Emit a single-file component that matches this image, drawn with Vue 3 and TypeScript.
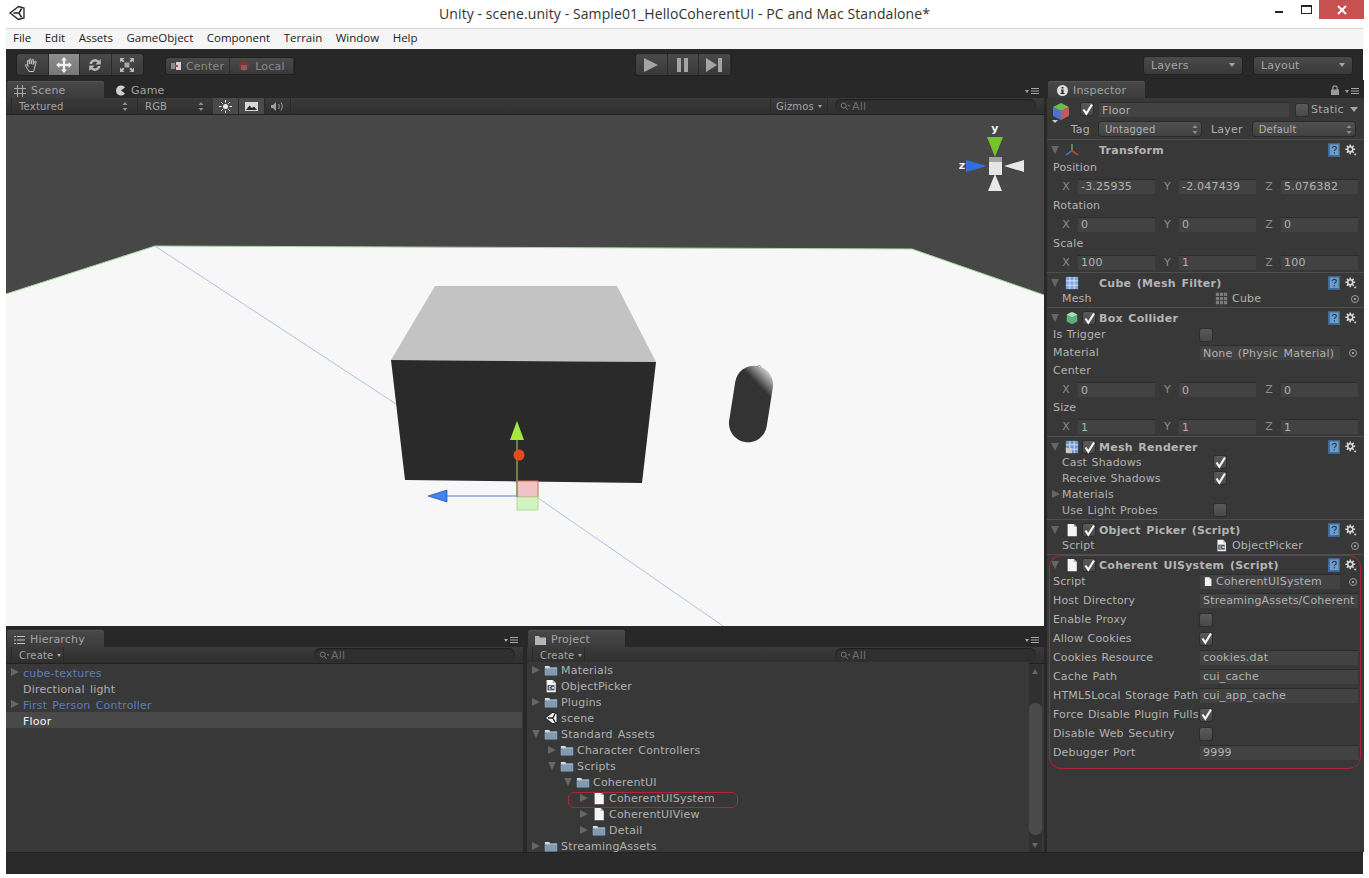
<script setup lang="ts">
type RowKind = 'label' | 'vec' | 'field' | 'check' | 'object' | 'fold'

interface Row {
  kind: RowKind
  label: string
  value?: string
  vec?: [string, string, string]
  checked?: boolean
  icon?: string
  target?: boolean
}

interface Section {
  title: string
  icon: string
  enabled?: boolean
  density: 'rows-t' | 'rows-19' | 'rows-18' | 'rows-16'
  rows: Row[]
}

interface TreeNode {
  name: string
  depth: number
  arrow?: 'right' | 'down'
  icon?: string
  tone?: 'prefab' | 'selected'
}

const menus = ['File', 'Edit', 'Assets', 'GameObject', 'Component', 'Terrain', 'Window', 'Help']
const tools = ['i-hand', 'i-move', 'i-rotate', 'i-scale']

const sections: Section[] = [
  {
    title: 'Transform', icon: 'i-axes', density: 'rows-t',
    rows: [
      { kind: 'label', label: 'Position' },
      { kind: 'vec', label: '', vec: ['-3.25935', '-2.047439', '5.076382'] },
      { kind: 'label', label: 'Rotation' },
      { kind: 'vec', label: '', vec: ['0', '0', '0'] },
      { kind: 'label', label: 'Scale' },
      { kind: 'vec', label: '', vec: ['100', '1', '100'] },
    ],
  },
  {
    title: 'Cube (Mesh Filter)', icon: 'i-mesh', density: 'rows-16',
    rows: [{ kind: 'object', label: 'Mesh', value: 'Cube', icon: 'i-meshgrid', target: true }],
  },
  {
    title: 'Box Collider', icon: 'i-collider', enabled: true, density: 'rows-18',
    rows: [
      { kind: 'check', label: 'Is Trigger', checked: false },
      { kind: 'field', label: 'Material', value: 'None (Physic Material)', target: true },
      { kind: 'label', label: 'Center' },
      { kind: 'vec', label: '', vec: ['0', '0', '0'] },
      { kind: 'label', label: 'Size' },
      { kind: 'vec', label: '', vec: ['1', '1', '1'] },
    ],
  },
  {
    title: 'Mesh Renderer', icon: 'i-renderer', enabled: true, density: 'rows-16',
    rows: [
      { kind: 'check', label: 'Cast Shadows', checked: true },
      { kind: 'check', label: 'Receive Shadows', checked: true },
      { kind: 'fold', label: 'Materials' },
      { kind: 'check', label: 'Use Light Probes', checked: false },
    ],
  },
  {
    title: 'Object Picker (Script)', icon: 'i-file', enabled: true, density: 'rows-16',
    rows: [{ kind: 'object', label: 'Script', value: 'ObjectPicker', icon: 'i-csfile', target: true }],
  },
  {
    title: 'Coherent UISystem (Script)', icon: 'i-file', enabled: true, density: 'rows-19',
    rows: [
      { kind: 'field', label: 'Script', value: 'CoherentUISystem', icon: 'i-file', target: true },
      { kind: 'field', label: 'Host Directory', value: 'StreamingAssets/Coherent' },
      { kind: 'check', label: 'Enable Proxy', checked: false },
      { kind: 'check', label: 'Allow Cookies', checked: true },
      { kind: 'field', label: 'Cookies Resource', value: 'cookies.dat' },
      { kind: 'field', label: 'Cache Path', value: 'cui_cache' },
      { kind: 'field', label: 'HTML5Local Storage Path', value: 'cui_app_cache' },
      { kind: 'check', label: 'Force Disable Plugin Fulls', checked: true },
      { kind: 'check', label: 'Disable Web Secutiry', checked: false },
      { kind: 'field', label: 'Debugger Port', value: '9999' },
    ],
  },
]

const hierarchy: TreeNode[] = [
  { name: 'cube-textures', depth: 0, arrow: 'right', tone: 'prefab' },
  { name: 'Directional light', depth: 0 },
  { name: 'First Person Controller', depth: 0, arrow: 'right', tone: 'prefab' },
  { name: 'Floor', depth: 0, tone: 'selected' },
]

const project: TreeNode[] = [
  { name: 'Materials', depth: 0, arrow: 'right', icon: 'i-folder' },
  { name: 'ObjectPicker', depth: 0, icon: 'i-csfile' },
  { name: 'Plugins', depth: 0, arrow: 'right', icon: 'i-folder' },
  { name: 'scene', depth: 0, icon: 'i-unity' },
  { name: 'Standard Assets', depth: 0, arrow: 'down', icon: 'i-folder' },
  { name: 'Character Controllers', depth: 1, arrow: 'right', icon: 'i-folder' },
  { name: 'Scripts', depth: 1, arrow: 'down', icon: 'i-folder' },
  { name: 'CoherentUI', depth: 2, arrow: 'down', icon: 'i-folder' },
  { name: 'CoherentUISystem', depth: 3, arrow: 'right', icon: 'i-file' },
  { name: 'CoherentUIView', depth: 3, arrow: 'right', icon: 'i-file' },
  { name: 'Detail', depth: 3, arrow: 'right', icon: 'i-folder' },
  { name: 'StreamingAssets', depth: 0, arrow: 'right', icon: 'i-folder' },
]

const indent = (node: TreeNode) => `${node.depth * 16}px`
</script>

<template>
  <div class="window">
    <!-- shared icons -->
    <svg class="defs" aria-hidden="true">
      <symbol id="i-unity" viewBox="0 0 16 16">
        <path d="M1 8 9.5 1.5 15 3 15 13 9.5 14.5Z" fill="#f2f2f2" stroke="#222" stroke-width="1.3" />
        <path d="M4.5 8H10L12.5 3.6M10 8l2.5 4.4" fill="none" stroke="#222" stroke-width="1.5" />
      </symbol>
      <symbol id="i-hand" viewBox="0 0 16 16">
        <path d="M5 14.5C3.500 12 2 10 1.500 8.500c-.3-1 .8-1.400 1.400-.6L4 9.500 3.400 4c-.1-1 1.200-1.200 1.400-.2L5.500 7 5.600 2.500c0-1 1.400-1 1.400 0L7.300 7 8.100 3c.2-1 1.500-.8 1.400.2L9.200 7.500 10.800 4.500c.4-.9 1.600-.4 1.300.5L10.800 10c-.3 1.800-.8 3-1.300 4.500Z" fill="none" stroke="#c4c4c4" stroke-width="1" />
      </symbol>
      <symbol id="i-move" viewBox="0 0 16 16">
        <path d="M8 0 11 3.500H9.200V6.800H12.500V5L16 8 12.500 11V9.200H9.200V12.500H11L8 16 5 12.500H6.800V9.200H3.500V11L0 8 3.500 5V6.800H6.800V3.500H5Z" fill="#f0f0f0" />
      </symbol>
      <symbol id="i-rotate" viewBox="0 0 16 16">
        <path d="M2.500 7A5.600 5.600 0 0 1 12 3.800L13.800 2V7.500H8.300L10.300 5.500A3.200 3.200 0 0 0 5 7ZM13.500 9A5.600 5.600 0 0 1 4 12.200L2.200 14V8.500H7.700L5.700 10.500A3.200 3.200 0 0 0 11 9Z" fill="#b8b8b8" />
      </symbol>
      <symbol id="i-scale" viewBox="0 0 16 16">
        <path d="M5.500 5.500h5v5h-5z" fill="#a8a8a8" />
        <path d="M1 1h4.500L4 2.500 5.500 4 4 5.500 2.500 4 1 5.500ZM15 1v4.500L13.500 4 12 5.500 10.500 4 12 2.500 10.500 1ZM1 15v-4.500L2.500 12 4 10.500 5.500 12 4 13.500 5.500 15ZM15 15h-4.500L12 13.500 10.500 12 12 10.500 13.500 12 15 10.500Z" fill="#b8b8b8" />
      </symbol>
      <symbol id="i-folder" viewBox="0 0 16 16">
        <path d="M1 3.500h5l1 1.500h8v9H1Z" fill="#d4dde6" />
        <path d="M1 6h14v8H1Z" fill="#7f9ab3" />
      </symbol>
      <symbol id="i-file" viewBox="0 0 16 16">
        <path d="M3 1h7l3.500 3.500V15H3Z" fill="#f4f4f4" />
        <path d="M10 1v3.500h3.500" fill="#b5b5b5" />
      </symbol>
      <symbol id="i-csfile" viewBox="0 0 16 16">
        <path d="M3 1h7l3.500 3.500V15H3Z" fill="#f4f4f4" />
        <path d="M10 1v3.500h3.500" fill="#b5b5b5" />
        <path d="M4 7h8v6H4z" fill="#42505e" />
        <path d="M8 8.500H6v3h2M9.500 9v2M11 9v2M9 9.700h2.500M9 10.500h2.500" stroke="#f4f4f4" fill="none" stroke-width=".8" />
      </symbol>
      <symbol id="i-axes" viewBox="0 0 16 16">
        <path d="M8 9V1" stroke="#5fa04a" stroke-width="1.800" />
        <path d="M8 9 1 13.500" stroke="#4a72c9" stroke-width="1.800" />
        <path d="M8 9 15 13.500" stroke="#c2453c" stroke-width="1.800" />
      </symbol>
      <symbol id="i-mesh" viewBox="0 0 16 16">
        <rect x="1" y="1" width="14" height="14" fill="#7ea6e0" />
        <path d="M1 5.500h14M1 10.500h14M5.500 1v14M10.500 1v14" stroke="#dce8fa" stroke-width="1" />
      </symbol>
      <symbol id="i-renderer" viewBox="0 0 16 16">
        <rect x="1" y="1" width="14" height="14" fill="#6f94c8" />
        <path d="M1 5.500h14M1 10.500h14M5.500 1v14M10.500 1v14" stroke="#dce8fa" stroke-width="1" />
        <path d="M1 9h7v6H1z" fill="#c9c9c9" />
      </symbol>
      <symbol id="i-meshgrid" viewBox="0 0 16 16">
        <path d="M1 1h4v4H1zM6 1h4v4H6zM11 1h4v4h-4zM1 6h4v4H1zM6 6h4v4H6zM11 6h4v4h-4zM1 11h4v4H1zM6 11h4v4H6zM11 11h4v4h-4z" fill="#7b7b7b" />
      </symbol>
      <symbol id="i-collider" viewBox="0 0 16 16">
        <path d="M8 1 14 4v8l-6 3-6-3V4Z" fill="#5fae7e" />
        <path d="M8 1 14 4 8 7 2 4Z" fill="#a3dcb6" />
      </symbol>
      <symbol id="i-gear" viewBox="0 0 16 16">
        <circle cx="7" cy="7" r="3.400" fill="none" stroke="#d8d8d8" stroke-width="2.200" />
        <path d="M7 .5V3M7 11v2.500M.5 7H3M11 7h2.500M2.400 2.400 4.200 4.200M9.800 9.800l1.800 1.800M2.400 11.600 4.200 9.800M9.800 4.200l1.800-1.800" stroke="#d8d8d8" stroke-width="2" />
        <path d="M11.500 13h4L13.500 15.500Z" fill="#d8d8d8" />
      </symbol>
      <symbol id="i-help" viewBox="0 0 13 15">
        <path d="M0 0h13v15H0Z" fill="#3f6a96" />
        <path d="M2 1.500h9.500V13H2Z" fill="#6f9cc8" />
        <path d="M4.500 5.500c0-2.500 4.500-2.500 4.500 0 0 1.500-2.200 1.400-2.200 3M6.800 9.800v1.500" fill="none" stroke="#1f3f60" stroke-width="1.200" />
      </symbol>
      <symbol id="i-check" viewBox="0 0 13 13">
        <path d="M2.500 6.500 5.300 10.800 11 1.500" fill="none" stroke="#f4f4f4" stroke-width="2.200" />
      </symbol>
      <symbol id="i-updown" viewBox="0 0 6 9">
        <path d="M3 0 5.500 3H.5ZM3 9 .5 6h5Z" fill="#8f8f8f" />
      </symbol>
      <symbol id="i-panelmenu" viewBox="0 0 14 8">
        <path d="M0 3h4L2 6ZM6 1h8v1H6ZM6 3.500h8v1H6ZM6 6h8v1H6Z" fill="#a8a8a8" />
      </symbol>
      <symbol id="i-search" viewBox="0 0 12 10">
        <circle cx="4" cy="4" r="2.800" fill="none" stroke="#777" stroke-width="1.100" />
        <path d="M6 6 8.500 9" stroke="#777" stroke-width="1.100" />
        <path d="M8.500 3.500h3L10 5.500Z" fill="#777" />
      </symbol>
    </svg>

    <header class="titlebar">
      <svg class="app-logo"><use href="#i-unity" /></svg>
      <div class="title">Unity - scene.unity - Sample01_HelloCoherentUI - PC and Mac Standalone*</div>
      <div class="win-controls">
        <span class="win-min"></span>
        <span class="win-max"></span>
        <span class="win-close">
          <svg width="10" height="10" viewBox="0 0 10 10"><path d="M1 1 9 9M9 1 1 9" stroke="#fff" stroke-width="2" /></svg>
        </span>
      </div>
    </header>

    <nav class="menubar">
      <span v-for="item in menus" :key="item" class="menu-item">{{ item }}</span>
    </nav>

    <div class="editor">
      <div class="toolbar">
        <div class="btn-group tools">
          <span v-for="(tool, i) in tools" :key="tool" class="tool-btn" :class="{ active: i === 1 }">
            <svg width="16" height="16"><use :href="`#${tool}`" /></svg>
          </span>
        </div>
        <div class="btn-group pivot">
          <span class="pivot-btn">
            <svg width="10" height="8" viewBox="0 0 10 8"><path d="M0 1h4v6H0z" fill="#8b8b8b" /><path d="M5 0h5v8H5z" fill="#d2d2d2" /><path d="M4 3h3v2H4z" fill="#b5483f" /></svg>
            Center
          </span>
          <span class="pivot-btn">
            <svg width="12" height="12" viewBox="0 0 12 12"><circle cx="6" cy="6" r="5" fill="#8c2f2a" /><path d="M3 5h6v5H3z" fill="#6b6b6b" /></svg>
            Local
          </span>
        </div>
        <div class="btn-group playback">
          <span class="play-btn"><svg width="16" height="14" viewBox="0 0 16 14"><path d="M1 0 15 7 1 14Z" fill="#a4a4a4" /></svg></span>
          <span class="play-btn"><svg width="11" height="14" viewBox="0 0 11 14"><path d="M0 0h4v14H0zM7 0h4v14H7z" fill="#a4a4a4" /></svg></span>
          <span class="play-btn"><svg width="16" height="14" viewBox="0 0 16 14"><path d="M0 0 11 7 0 14ZM12 0h4v14h-4z" fill="#a4a4a4" /></svg></span>
        </div>
        <div class="top-drop first">Layers <i class="caret"></i></div>
        <div class="top-drop">Layout <i class="caret"></i></div>
      </div>

      <div class="main">
        <section class="scene-panel">
          <div class="tabs">
            <div class="tab active">
              <svg width="12" height="12" viewBox="0 0 12 12"><path d="M3.500 0v12M8.500 0v12M0 3.500h12M0 8.500h12" stroke="#a8a8a8" /></svg>
              Scene
            </div>
            <div class="tab">
              <svg width="11" height="11" viewBox="0 0 11 11"><path d="M10 2.500A5 5 0 1 0 10 8.500L6 5.500Z" fill="#cfcfcf" /></svg>
              Game
            </div>
            <svg class="panel-menu"><use href="#i-panelmenu" /></svg>
          </div>
          <div class="sub-toolbar">
            <div class="sub-drop textured">Textured <svg width="6" height="9"><use href="#i-updown" /></svg></div>
            <div class="sub-drop rgb">RGB <svg width="6" height="9"><use href="#i-updown" /></svg></div>
            <div class="sub-icon on">
              <svg width="13" height="13" viewBox="0 0 13 13"><circle cx="6.500" cy="6.500" r="2.500" fill="#efefef" /><path d="M6.500 0v2.500M6.500 10.500V13M0 6.500h2.500M10.500 6.500H13M2 2l1.700 1.700M9.300 9.300 11 11M2 11l1.700-1.700M9.300 3.700 11 2" stroke="#efefef" /></svg>
            </div>
            <div class="sub-icon on">
              <svg width="13" height="9" viewBox="0 0 13 9"><path d="M0 0h13v9H0z" fill="#d8d8d8" /><path d="M1 8 4.500 3.500 7 6l2-1.500L12 8Z" fill="#2c2c2c" /></svg>
            </div>
            <div class="sub-icon">
              <svg width="13" height="11" viewBox="0 0 13 11"><path d="M0 4h2l3-3v9L2 7H0Z" fill="#a0a0a0" /><path d="M7.500 3c1 1.500 1 3.500 0 5M10 1.500c1.700 2.500 1.700 5.500 0 8" fill="none" stroke="#a0a0a0" /></svg>
            </div>
            <div class="gizmos">Gizmos <i class="caret small"></i></div>
            <div class="search"><svg width="11" height="9"><use href="#i-search" /></svg>All</div>
          </div>
          <div class="scene-view">
            <!-- scene is a free canvas, coordinates are window pixels -->
            <svg class="scene-canvas" viewBox="6 115 1038 511" preserveAspectRatio="none">
              <defs>
                <linearGradient id="capsule" gradientUnits="userSpaceOnUse" x1="16" y1="-36" x2="4" y2="-20">
                  <stop offset="0" stop-color="#eeeeee" />
                  <stop offset="1" stop-color="#333" />
                </linearGradient>
              </defs>
              <rect x="6" y="115" width="1038" height="511" fill="#474747" />
              <path d="M6 294 155 246 912 249 1044 295V626H6Z" fill="#f7f7f7" />
              <path d="M6 294 155 246 912 249 1044 295" fill="none" stroke="#a5d6a0" stroke-width="1" />
              <path d="M155 246 515 482 723 626" fill="none" stroke="#a9c4e8" stroke-width="1" />
              <path d="M435 286H617L656 362 391 360Z" fill="#c3c3c3" />
              <path d="M391 360 656 362 642 483 405 480Z" fill="#2a2a2a" />
              <rect x="-19" y="-38.500" width="38" height="77" rx="19" transform="translate(751 404) rotate(9)" fill="url(#capsule)" />
              <path d="M757 367c1-2 3-2 4 0" fill="none" stroke="#777" stroke-width=".8" />
              <rect x="517" y="481" width="21" height="16" fill="#f0c4c4" stroke="#d0705c" />
              <rect x="517" y="497" width="21" height="13" fill="#d2f2c2" stroke="#b2dc96" />
              <path d="M517 440V497" stroke="#8a9a50" stroke-width="1.500" />
              <path d="M517 421 524 440H510Z" fill="#a6e83c" />
              <circle cx="519" cy="455" r="5.500" fill="#ea4a1c" />
              <path d="M447 496H517" stroke="#4f86d8" stroke-width="1" />
              <path d="M428 496 447 490V502Z" fill="#3f86f0" stroke="#123a80" stroke-width=".6" />
              <path d="M987 137H1003L995 157Z" fill="#74c42c" />
              <path d="M966 160V172L987 166Z" fill="#2f6fe0" />
              <path d="M1024 160V172L1004 166Z" fill="#e8e8e8" />
              <path d="M995 174 1002 191H988Z" fill="#e8e8e8" />
              <rect x="989" y="157" width="13" height="5" fill="#a2a2a2" />
              <rect x="989" y="162" width="13" height="13" fill="#e6e6e6" />
              <text x="995" y="132" class="gizmo-label" text-anchor="middle">y</text>
              <text x="962" y="169" class="gizmo-label" text-anchor="middle">z</text>
            </svg>
          </div>
        </section>

        <aside class="inspector">
          <div class="tabs">
            <div class="tab active inspector-tab">
              <svg width="11" height="11" viewBox="0 0 11 11"><circle cx="5.500" cy="5.500" r="5.500" fill="#dcdcdc" /><path d="M4.500 2h2v1.500h-2zM4 4.500h2.500V8H7.500V9h-4V8h1V5.500H4Z" fill="#2a2a2a" /></svg>
              Inspector
            </div>
            <svg class="lock" width="8" height="10" viewBox="0 0 8 10"><path d="M0 4.500h8V10H0z" fill="#9a9a9a" /><path d="M1.800 5V3a2.200 2.200 0 0 1 4.400 0v2" fill="none" stroke="#9a9a9a" stroke-width="1.200" /></svg>
            <svg class="panel-menu"><use href="#i-panelmenu" /></svg>
          </div>

          <div class="object-head">
            <div class="head-lead">
              <svg class="object-cube" width="18" height="22" viewBox="0 0 18 22">
                <path d="M9 1 17 5 9 9 1 5Z" fill="#6dbb55" />
                <path d="M1 5 9 9V18L1 14Z" fill="#4f72cf" />
                <path d="M17 5 9 9V18L17 14Z" fill="#c45a57" />
                <path d="M0 18h6L3 21Z" fill="#c9c9c9" />
              </svg>
              <span class="checkbox"><svg width="13" height="13"><use href="#i-check" /></svg></span>
            </div>
            <div class="head-main">
              <div class="field name-field">Floor</div>
              <span class="checkbox"></span>
              <span class="static-label">Static</span>
              <i class="caret big"></i>
            </div>
            <div class="tag-label">Tag</div>
            <div class="head-main">
              <div class="mini-drop">Untagged <svg width="6" height="9"><use href="#i-updown" /></svg></div>
              <span class="layer-label">Layer</span>
              <div class="mini-drop">Default <svg width="6" height="9"><use href="#i-updown" /></svg></div>
            </div>
          </div>

          <div v-for="section in sections" :key="section.title" class="component" :class="section.density">
            <div class="comp-header">
              <i class="arrow down"></i>
              <svg class="comp-icon" width="14" height="14"><use :href="`#${section.icon}`" /></svg>
              <span class="check-slot">
                <span v-if="section.enabled" class="checkbox"><svg width="13" height="13"><use href="#i-check" /></svg></span>
              </span>
              <span class="comp-title">{{ section.title }}</span>
              <svg class="help" width="12" height="14"><use href="#i-help" /></svg>
              <svg class="gear" width="12" height="12"><use href="#i-gear" /></svg>
            </div>

            <template v-for="(row, i) in section.rows" :key="i">
              <div v-if="row.kind === 'vec'" class="vec-row">
                <template v-for="(v, axis) in row.vec" :key="axis">
                  <span class="axis">{{ ['X', 'Y', 'Z'][axis] }}</span>
                  <span class="field">{{ v }}</span>
                </template>
              </div>
              <div v-else class="row" :class="{ fold: row.kind === 'fold' }">
                <span class="row-label"><i v-if="row.kind === 'fold'" class="arrow right"></i>{{ row.label }}</span>
                <span v-if="row.kind === 'check'" class="checkbox">
                  <svg v-if="row.checked" width="13" height="13"><use href="#i-check" /></svg>
                </span>
                <span v-else-if="row.kind === 'field'" class="field wide" :class="{ short: row.target }">
                  <svg v-if="row.icon" width="10" height="11"><use :href="`#${row.icon}`" /></svg>
                  {{ row.value }}
                </span>
                <span v-else-if="row.kind === 'object'" class="object-ref">
                  <svg width="13" height="13"><use :href="`#${row.icon}`" /></svg>
                  {{ row.value }}
                </span>
                <span v-if="row.target" class="target"></span>
              </div>
            </template>
          </div>

          <div class="red-mark inspector-mark"></div>
        </aside>

        <section class="tree-panel">
          <div class="tabs">
            <div class="tab active">
              <svg width="11" height="10" viewBox="0 0 11 10"><path d="M0 1h2v1H0zM0 4.500h2v1H0zM0 8h2v1H0zM3 1h8v1H3zM3 4.500h8v1H3zM3 8h8v1H3z" fill="#c0c0c0" /></svg>
              Hierarchy
            </div>
            <svg class="panel-menu"><use href="#i-panelmenu" /></svg>
          </div>
          <div class="sub-toolbar">
            <div class="create">Create <i class="caret small"></i></div>
            <div class="search"><svg width="11" height="9"><use href="#i-search" /></svg>All</div>
          </div>
          <div class="tree hierarchy">
            <div v-for="node in hierarchy" :key="node.name" class="node" :class="node.tone">
              <i v-if="node.arrow" class="arrow" :class="node.arrow"></i>
              <span v-else class="arrow-slot"></span>
              <span class="node-name">{{ node.name }}</span>
            </div>
          </div>
        </section>

        <section class="tree-panel">
          <div class="tabs">
            <div class="tab active">
              <svg width="11" height="10" viewBox="0 0 11 10"><path d="M0 1h4l1 1.500h6V10H0Z" fill="#b4b4b4" /></svg>
              Project
            </div>
            <svg class="panel-menu"><use href="#i-panelmenu" /></svg>
          </div>
          <div class="sub-toolbar">
            <div class="create">Create <i class="caret small"></i></div>
            <div class="search"><svg width="11" height="9"><use href="#i-search" /></svg>All</div>
          </div>
          <div class="project-body">
            <div class="tree scrolled">
              <div v-for="node in project" :key="node.name" class="node project-node" :style="{ paddingLeft: indent(node) }">
                <i v-if="node.arrow" class="arrow" :class="node.arrow"></i>
                <span v-else class="arrow-slot"></span>
                <svg class="node-icon" width="14" height="14"><use :href="`#${node.icon}`" /></svg>
                <span>{{ node.name }}</span>
              </div>
            </div>
            <div class="scrollbar">
              <i class="scroll-up"></i>
              <div class="thumb"></div>
              <i class="scroll-down"></i>
            </div>
            <div class="red-mark tree-mark"></div>
          </div>
        </section>
      </div>

      <footer class="status"></footer>
    </div>
  </div>
</template>

<style>
html, body { margin: 0; background: #fff; }
</style>

<style scoped>
.window {
  width: 1369px;
  height: 878px;
  background: #fff;
  overflow: hidden;
  font-family: "DejaVu Sans", sans-serif;
  font-size: 11px;
  letter-spacing: 0.2px;
  word-spacing: 1.5px;
  color: #b2b2b2;
}
.defs { position: absolute; width: 0; height: 0; }

.titlebar {
  height: 28px;
  display: grid;
  grid-template-columns: 1fr auto 1fr;
  align-items: center;
}
.app-logo { width: 16px; height: 16px; margin-left: 9px; margin-top: -2px; }
.title {
  font-family: "Open Sans", sans-serif;
  font-size: 14px;
  letter-spacing: 0.09px;
  word-spacing: 0;
  color: #333;
  margin-top: -1px;
}
.win-controls {
  justify-self: end;
  align-self: start;
  display: flex;
  align-items: flex-start;
  margin-right: 5px;
}
.win-min { width: 8px; height: 2px; background: #222; margin: 11px 18px 0 0; }
.win-max { width: 9px; height: 6px; border: 1px solid #222; border-top-width: 2px; margin: 5px 7px 0 0; }
.win-close {
  width: 45px;
  height: 19px;
  background: #c75050;
  display: flex;
  align-items: center;
  justify-content: center;
}

.menubar {
  height: 20px;
  margin: 0 6px;
  box-sizing: content-box;
  background: #f5f5f5;
  border-top: 1px solid #d6d6d6;
  display: flex;
  align-items: flex-start;
  padding-left: 7px;
  gap: 13.5px;
  font-family: "Open Sans", sans-serif;
  font-size: 11.5px;
  line-height: 18px;
  letter-spacing: 0;
  color: #222;
}

.editor {
  margin: 0 6px;
  background: #282828;
  height: 825px;
}

.toolbar {
  height: 31px;
  display: flex;
  align-items: center;
  padding: 0 11px;
  color: #8a8a8a;
}
.btn-group {
  display: flex;
  border-radius: 3px;
  background: linear-gradient(#4a4a4a, #393939);
  box-shadow: 0 0 0 1px #222;
  overflow: hidden;
}
.tools { height: 21px; }
.tool-btn {
  width: 31.5px;
  display: flex;
  align-items: center;
  justify-content: center;
  border-right: 1px solid #2b2b2b;
  box-sizing: border-box;
}
.tool-btn:last-child { border-right: 0; }
.tool-btn.active { background: linear-gradient(#8e8e8e, #777); }
.pivot { margin-left: 23px; height: 16px; margin-top: 3px; }
.pivot-btn {
  width: 64px;
  display: flex;
  align-items: center;
  justify-content: center;
  gap: 5px;
  font-size: 11px;
  border-right: 1px solid #2b2b2b;
  box-sizing: border-box;
}
.playback { margin-left: 342px; height: 21px; }
.play-btn {
  width: 31.5px;
  display: flex;
  align-items: center;
  justify-content: center;
  border-right: 1px solid #2b2b2b;
  box-sizing: border-box;
}
.top-drop {
  width: 98px;
  height: 17px;
  box-sizing: border-box;
  padding: 0 7px;
  display: flex;
  align-items: center;
  justify-content: space-between;
  border-radius: 3px;
  background: linear-gradient(#4a4a4a, #3a3a3a);
  box-shadow: 0 0 0 1px #222;
  color: #a6a6a6;
  margin-left: 12px;
  margin-top: 1px;
}
.top-drop.first { margin-left: auto; }
.caret {
  width: 0;
  height: 0;
  border-left: 3px solid transparent;
  border-right: 3px solid transparent;
  border-top: 4px solid #a6a6a6;
}
.caret.small { border-left-width: 2.500px; border-right-width: 2.500px; border-top-width: 3px; }
.caret.big { border-left-width: 4px; border-right-width: 4px; border-top-width: 5px; margin-left: 6px; }

.main {
  display: grid;
  grid-template-columns: 517px 517px 316px;
  grid-template-rows: 546px 223px;
  column-gap: 4px;
  row-gap: 3px;
  height: 772px;
}
.scene-panel {
  grid-column: 1 / 3;
  display: flex;
  flex-direction: column;
  min-width: 0;
}
.inspector {
  grid-column: 3;
  grid-row: 1 / 3;
  margin-left: -1px;
  position: relative;
  display: flex;
  flex-direction: column;
  background: #383838;
  background-clip: content-box;
  padding-top: 18px;
  width: 317px;
  box-sizing: border-box;
}
.inspector .tabs { margin-top: -18px; }
.tree-panel { display: flex; flex-direction: column; min-width: 0; }

.tabs {
  height: 18px;
  flex: none;
  display: flex;
  align-items: flex-end;
  background: #282828;
  position: relative;
}
.tab {
  width: 97px;
  height: 17px;
  margin-left: 1px;
  padding-left: 7px;
  padding-top: 2px;
  box-sizing: border-box;
  display: flex;
  align-items: center;
  gap: 5px;
  font-size: 11px;
  color: #a2a2a2;
  border-radius: 3px 3px 0 0;
}
.tab.active {
  background: linear-gradient(#484848, #3c3c3c);
  box-shadow: inset 0 1px 0 #555;
}
.tab:not(.active) { margin-left: 4px; }
.inspector-tab { padding-left: 9px; }
.panel-menu {
  width: 14px;
  height: 8px;
  position: absolute;
  right: 5px;
  bottom: 3px;
}
.lock { position: absolute; right: 25px; bottom: 3px; }

.sub-toolbar {
  height: 17px;
  flex: none;
  display: flex;
  align-items: center;
  background: linear-gradient(#3a3a3a, #2f2f2f);
  border-bottom: 1px solid #222;
  box-sizing: border-box;
  padding-left: 5px;
  font-size: 10px;
  color: #a4a4a4;
}
.sub-drop {
  height: 16px;
  display: flex;
  align-items: center;
  justify-content: space-between;
  box-sizing: border-box;
  padding: 0 3px 0 7px;
  border-left: 1px solid #2a2a2a;
}
.textured { width: 126px; padding-right: 9px; }
.rgb { width: 70px; margin-left: 0; }
.sub-icon {
  width: 25px;
  height: 16px;
  display: flex;
  align-items: center;
  justify-content: center;
  border-right: 1px solid #2a2a2a;
}
.rgb + .sub-icon { margin-left: 6px; }
.sub-icon.on { background: #4a4a4a; }
.gizmos {
  margin-left: auto;
  width: 56px;
  height: 16px;
  display: flex;
  align-items: center;
  justify-content: center;
  gap: 4px;
  border-left: 1px solid #2a2a2a;
  border-right: 1px solid #2a2a2a;
}
.create {
  width: 53px;
  height: 16px;
  display: flex;
  align-items: center;
  gap: 4px;
  box-sizing: border-box;
  padding-left: 7px;
  border-left: 1px solid #2a2a2a;
  border-right: 1px solid #2a2a2a;
}
.search {
  width: 201px;
  height: 14px;
  margin-left: auto;
  margin-right: 8px;
  border-radius: 7px;
  background: #2f2f2f;
  box-shadow: inset 0 1px 1px #1d1d1d;
  display: flex;
  align-items: center;
  gap: 1px;
  padding-left: 5px;
  box-sizing: border-box;
  font-size: 11px;
  color: #6e6e6e;
}
.gizmos + .search { margin-left: 7px; }

.scene-view { flex: 1; min-height: 0; }
.scene-canvas { display: block; width: 100%; height: 100%; }
.gizmo-label {
  font-family: "DejaVu Sans", sans-serif;
  font-weight: 700;
  font-size: 11px;
  fill: #f2f2f2;
}

.object-head {
  height: 41px;
  flex: none;
  display: grid;
  grid-template-columns: 52px 1fr;
  grid-template-rows: 23px 16px;
  align-items: center;
}
.head-lead {
  display: flex;
  align-items: flex-start;
  padding-left: 5px;
  height: 23px;
  padding-top: 4px;
  box-sizing: border-box;
}
.head-lead .checkbox { margin: 1px 0 0 11px; }
.object-cube { flex: none; }
.head-main { display: flex; align-items: center; }
.name-field { width: 190px; padding-left: 4px; }
.name-field + .checkbox { margin-left: 7px; }
.static-label { margin-left: 3px; color: #a8a8a8; }
.tag-label { text-align: right; padding-right: 9px; }
.mini-drop {
  width: 102px;
  height: 14px;
  box-sizing: border-box;
  padding: 0 3px 0 6px;
  display: flex;
  align-items: center;
  justify-content: space-between;
  border-radius: 3px;
  background: linear-gradient(#505050, #424242);
  box-shadow: 0 0 0 1px #2a2a2a;
  font-size: 10px;
}
.layer-label { margin: 0 10px; }

.component { flex: none; border-top: 1px solid #4e4e4e; }
.comp-header {
  height: 18px;
  box-sizing: border-box;
  padding-top: 2px;
  display: flex;
  align-items: center;
  padding-left: 4px;
  padding-right: 7px;
}
.comp-icon { margin-left: 4px; flex: none; width: 14px; margin-right: 4px; }
.check-slot { width: 16px; flex: none; display: flex; }
.comp-title { font-weight: 700; color: #b4b4b4; letter-spacing: 0.25px; }
.help { margin-left: auto; }
.gear { margin-left: 5px; }

.checkbox {
  width: 12px;
  height: 12px;
  flex: none;
  box-sizing: border-box;
  border-radius: 2px;
  background: linear-gradient(#5a5a5a, #484848);
  box-shadow: 0 0 0 1px #2d2d2d;
  display: inline-flex;
  align-items: center;
  justify-content: center;
}
.checkbox svg { flex: none; }

.arrow {
  display: inline-block;
  width: 0;
  height: 0;
  flex: none;
}
.arrow.down {
  border-left: 4px solid transparent;
  border-right: 4px solid transparent;
  border-top: 8px solid #666;
  margin-right: 2px;
}
.arrow.right {
  border-top: 4px solid transparent;
  border-bottom: 4px solid transparent;
  border-left: 8px solid #666;
  margin-right: 2px;
}

.row {
  display: grid;
  grid-template-columns: 147px auto 1fr;
  align-items: center;
  padding-left: 6px;
  padding-right: 5px;
}
.row-label {
  white-space: nowrap;
  overflow: hidden;
  display: flex;
  align-items: center;
  margin-top: -2px;
  letter-spacing: 0.15px;
  word-spacing: 0.8px;
}
.rows-t .row { height: 19px; }
.rows-t .row-label { margin-top: 0; }
.rows-t .vec-row .field { margin-top: -1px; }
.rows-19 .row { height: 19px; }
.rows-19 .row .field, .rows-19 .row .checkbox, .rows-19 .row .target { margin-top: -2px; }
.rows-19 .row .field { padding-bottom: 1px; }
.rows-18 .row { height: 18px; }
.rows-18 .row .field, .rows-18 .row .target { margin-top: -1px; }
.rows-16 .row {
  height: 16px;
  padding-left: 15px;
  grid-template-columns: 152px auto 1fr;
}
.rows-16 .row .checkbox { margin-top: -2px; }
.rows-16 .row.fold { padding-left: 5px; }
.rows-16 .row.fold .row-label { overflow: visible; }
.field {
  height: 15px;
  display: flex;
  align-items: center;
  gap: 3px;
  box-sizing: border-box;
  padding-left: 3px;
  background: #424242;
  border-top: 1px solid #2c2c2c;
  white-space: nowrap;
  overflow: hidden;
  color: #b2b2b2;
}
.row .field.wide { width: 158px; grid-column: 2 / 4; }
.row .field.short { width: 140px; grid-column: 2; }
.object-ref { display: flex; align-items: center; gap: 4px; padding-left: 1px; margin-top: -1px; }
.target {
  justify-self: end;
  width: 8px;
  height: 8px;
  border: 1px solid #9a9a9a;
  border-radius: 50%;
  box-sizing: border-box;
  background: radial-gradient(#9a9a9a 1px, transparent 1.5px);
}
.row .field.short + .target { margin-right: 2px; }

.vec-row {
  height: 19px;
  display: grid;
  grid-template-columns: 31px 77px 24px 77px 25px 77px;
  align-items: center;
}
.axis { text-align: right; padding-right: 8px; color: #8e8e8e; }

.red-mark {
  position: absolute;
  border: 1px solid #b3242f;
  pointer-events: none;
  box-sizing: border-box;
}
.inspector-mark {
  left: 2px;
  right: 3px;
  top: 475px;
  height: 214px;
  border-radius: 12px;
}

.tree-panel .tree { flex: 1; background: #383838; overflow: hidden; color: #b0b0b0; }
.node {
  height: 16px;
  display: flex;
  align-items: center;
  padding-left: 5px;
  white-space: nowrap;
}
.node .arrow.right, .node .arrow-slot { margin-right: 4px; }
.arrow-slot { width: 8px; flex: none; }
.node .arrow.down { margin-right: 4px; }
.hierarchy .node-name { padding-top: 2px; }
.prefab { color: #5b7dc0; }
.selected { background: #494949; color: #f4f4f4; margin-right: 1px; }

.project-body {
  flex: 1;
  min-height: 0;
  position: relative;
  display: flex;
  background: #383838;
}
.tree.scrolled { margin-top: -2px; padding-left: 5px; }
.project-node { padding-left: 0; }
.node-icon { margin: 0 3px 0 0; flex: none; }
.scrollbar {
  width: 13px;
  margin: 0 2px 0 0;
  background: #303030;
  position: relative;
  flex: none;
}
.thumb {
  position: absolute;
  top: 39px;
  height: 132px;
  left: 0;
  right: 0;
  border-radius: 6px;
  background: #4b4b4b;
}
.scroll-up, .scroll-down {
  position: absolute;
  left: 3px;
  width: 0;
  height: 0;
  border-left: 3.500px solid transparent;
  border-right: 3.500px solid transparent;
}
.scroll-up { top: 5px; border-bottom: 5px solid #666; }
.scroll-down { bottom: 4px; border-top: 5px solid #666; }
.tree-mark {
  left: 41px;
  top: 128px;
  width: 170px;
  height: 16px;
  border-radius: 6px;
}

.status {
  height: 22px;
  background: #2a2a2a;
  border-top: 1px solid #222;
  box-sizing: border-box;
}
</style>
